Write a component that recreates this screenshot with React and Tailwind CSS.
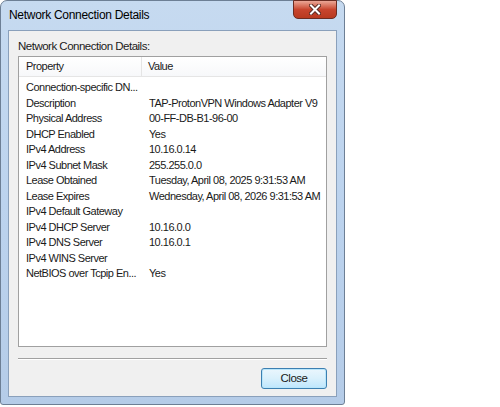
import React from "react";

const rows = [
  ["Connection-specific DN...", ""],
  ["Description", "TAP-ProtonVPN Windows Adapter V9"],
  ["Physical Address", "00-FF-DB-B1-96-00"],
  ["DHCP Enabled", "Yes"],
  ["IPv4 Address", "10.16.0.14"],
  ["IPv4 Subnet Mask", "255.255.0.0"],
  ["Lease Obtained", "Tuesday, April 08, 2025 9:31:53 AM"],
  ["Lease Expires", "Wednesday, April 08, 2026 9:31:53 AM"],
  ["IPv4 Default Gateway", ""],
  ["IPv4 DHCP Server", "10.16.0.0"],
  ["IPv4 DNS Server", "10.16.0.1"],
  ["IPv4 WINS Server", ""],
  ["NetBIOS over Tcpip En...", "Yes"],
];

export default function App() {
  return (
    <div
      className="w-[500px] h-[407px] bg-white overflow-hidden text-[11px] tracking-[-0.5px] text-[#1a1a1a]"
      style={{ fontFamily: '"Liberation Sans", Arial, sans-serif' }}
    >
      <div className="w-[345px] h-[405px] rounded-t-[7px] rounded-b-[3px] border border-[#6d7f95] bg-gradient-to-b from-[#c6daf0] via-[#bcd3ee] to-[#b5cce8] flex flex-col px-[7px] pb-[7px] relative">
        {/* title bar */}
        <div className="h-[29px] flex items-center pl-[1px] text-[12px] tracking-[-0.3px] text-black">
          <span className="mt-[-2px]">Network Connection Details</span>
        </div>
        {/* close button */}
        <div className="absolute top-[-1px] right-[7px] w-[44px] h-[19px] rounded-b-[5px] border border-[#6b2c22] bg-gradient-to-b from-[#eaa696] via-[#c8452e] to-[#b8391f] flex items-center justify-center">
          <svg width="12" height="11" viewBox="0 0 12 11">
            <path d="M2 1.5 L10 9.5 M10 1.5 L2 9.5" stroke="#5a2a22" strokeWidth="4" strokeLinecap="square" />
            <path d="M2 1.5 L10 9.5 M10 1.5 L2 9.5" stroke="#ffffff" strokeWidth="2" strokeLinecap="square" />
          </svg>
        </div>
        {/* client area */}
        <div className="flex-1 border border-[#8aa0bb] bg-[#f0f0f0] flex flex-col px-[9px]">
          <div className="pt-[7px] h-[25px] whitespace-nowrap text-[11.5px]">Network Connection Details:</div>
          <div className="h-[291px] border border-[#a0a0a0] bg-white flex flex-col overflow-hidden">
            <div className="h-[20px] flex shrink-0 border-b border-[#e5e5e5] bg-gradient-to-b from-white to-[#f7f8fa]">
              <div className="w-[123px] shrink-0 pl-[7px] flex items-center border-r border-[#e5e5e5]">Property</div>
              <div className="flex-1 pl-[6px] flex items-center">Value</div>
            </div>
            <div className="pt-[3px] flex flex-col">
              {rows.map(([k, v]) => (
                <div key={k} className="h-[15.5px] flex items-center leading-none">
                  <div className="w-[124px] shrink-0 pl-[7px] whitespace-nowrap">{k}</div>
                  <div className="flex-1 pl-[6px] whitespace-nowrap">{v}</div>
                </div>
              ))}
            </div>
          </div>
          <div className="mt-[11px] h-[2px] border-t border-[#a0a0a0] border-b border-b-white" />
          <div className="flex justify-end mt-[8px]">
            <div className="w-[66px] h-[21px] rounded-[3px] border border-[#3c7fb1] bg-gradient-to-b from-[#eaf6fd] via-[#d9f0fc] to-[#bee6fd] shadow-[inset_0_0_0_1px_#b9e6fb] flex items-center justify-center text-[11.5px]">
              Close
            </div>
          </div>
        </div>
      </div>
    </div>
  );
}
